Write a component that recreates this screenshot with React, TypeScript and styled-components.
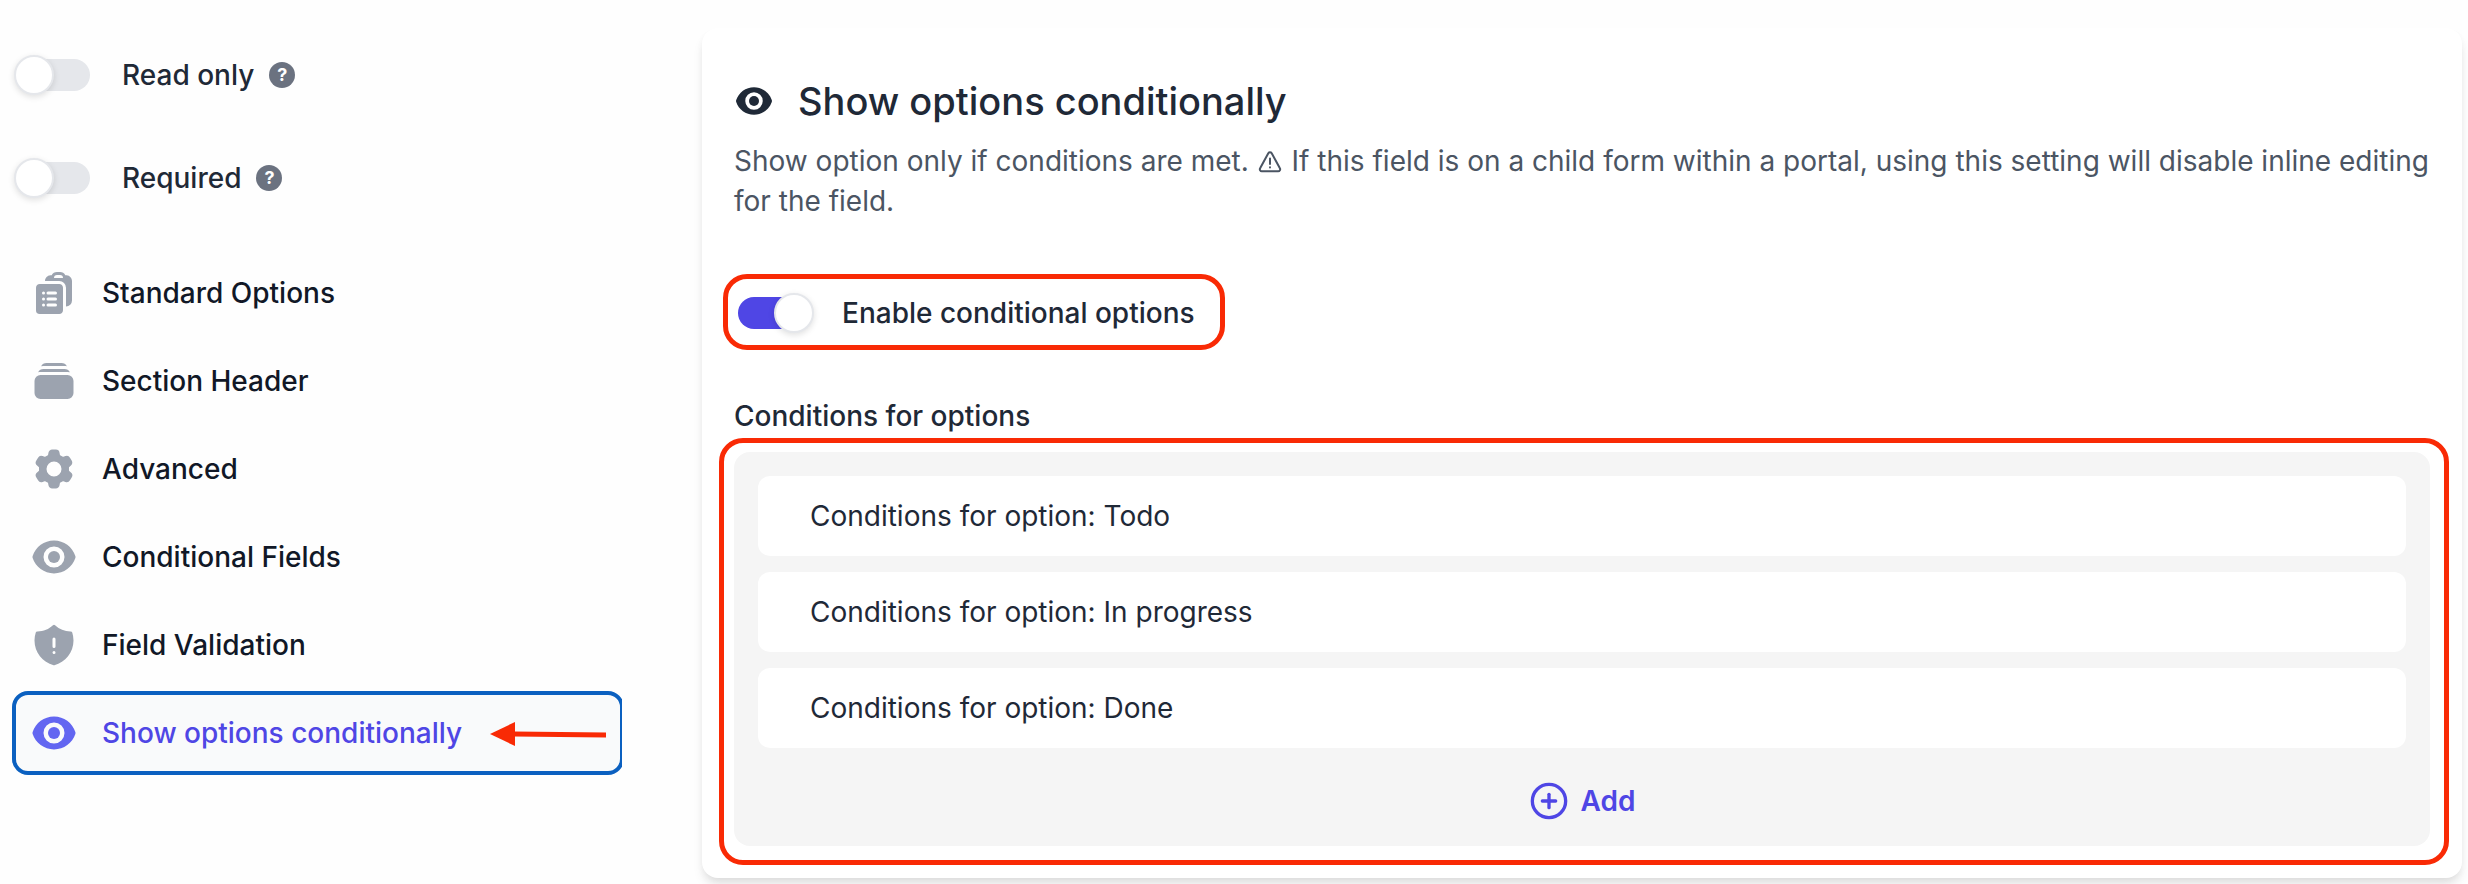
import React from 'react';
import styled, { createGlobalStyle, css } from 'styled-components';
import {
  HiClipboardDocumentList,
  HiCog6Tooth,
  HiEye,
  HiRectangleStack,
  HiShieldExclamation,
} from 'react-icons/hi2';
import { CirclePlus } from 'lucide-react';

const color = {
  ink: '#111827',
  text: '#1f2937',
  muted: '#4b5563',
  icon: '#9ca3af',
  brand: '#4f46e5',
  brandSoft: '#6366f1',
  focus: '#0b60c0',
  mark: '#f92a05',
  panel: '#f5f5f5',
};

const GlobalStyle = createGlobalStyle`
  *, *::before, *::after { box-sizing: border-box; }
  body {
    margin: 0;
    background: #fefefe;
    color: ${color.text};
    font-family: Inter, "Liberation Sans", sans-serif;
    font-size: 28px;
    line-height: 40px;
  }
  h1, h2, p, ul { margin: 0; padding: 0; }
  button, input { font: inherit; }
`;

const Page = styled.div`
  display: flex;
  align-items: flex-start;
  gap: 80px;
  padding: 28px 6px 6px 12px;
`;

const Sidebar = styled.aside`
  flex: none;
  width: 610px;
  padding-top: 27px;
`;

const Switches = styled.div`
  display: flex;
  flex-direction: column;
  gap: 63px;
  padding-left: 2px;
`;

const SwitchRow = styled.div`
  display: flex;
  align-items: center;
  height: 40px;
`;

const SwitchLabel = styled.label`
  margin-left: 28px;
  font-weight: 500;
`;

const Switch = styled.input.attrs({ type: 'checkbox', role: 'switch' })`
  appearance: none;
  flex: none;
  display: flex;
  align-items: center;
  width: 80px;
  height: 40px;
  margin: 0;
  position: relative;

  &::before {
    content: '';
    width: 72px;
    height: 32px;
    margin: 0 4px;
    border-radius: 16px;
    background: #e5e7eb;
  }
  &::after {
    content: '';
    position: absolute;
    left: 0;
    top: 0;
    width: 40px;
    height: 40px;
    border: 2px solid #e5e7eb;
    border-radius: 50%;
    background: #fff;
    box-shadow: 0 2px 6px rgba(0, 0, 0, 0.12);
  }
  &:checked::before { background: ${color.brand}; }
  &:checked::after { left: 40px; }
`;

const Help = styled.button`
  display: flex;
  align-items: center;
  justify-content: center;
  width: 26px;
  height: 26px;
  margin-left: 15px;
  padding: 0;
  border: 0;
  border-radius: 50%;
  background: #6b7280;
  color: #fff;
  font-size: 18px;
  font-weight: 700;
  line-height: 26px;
`;

const Nav = styled.nav`
  display: flex;
  flex-direction: column;
  gap: 4px;
  margin-top: 53px;
  overflow: hidden;
`;

const NavItem = styled.button<{ $active?: boolean }>`
  display: flex;
  align-items: center;
  height: 84px;
  margin-right: -2px;
  padding: 0 12px 0 14px;
  border: 4px solid transparent;
  border-radius: 16px;
  background: none;
  color: ${color.ink};
  font-weight: 500;
  text-align: left;
  white-space: nowrap;

  > svg:first-child {
    flex: none;
    width: 48px;
    height: 48px;
    margin-right: 24px;
    color: ${color.icon};
  }
  ${(p) =>
    p.$active &&
    css`
      border-color: ${color.focus};
      background: #f9fafb;
      color: ${color.brand};
      > svg:first-child { color: ${color.brandSoft}; }
    `}
`;

const Arrow = styled.svg`
  flex: none;
  width: 116px;
  height: 28px;
  margin-left: 28px;
`;

const Card = styled.main`
  flex: 1;
  min-width: 0;
  padding: 49px 32px 32px;
  border-radius: 16px;
  background: #fff;
  box-shadow: 0 8px 12px -2px rgba(0, 0, 0, 0.1), 0 4px 8px -2px rgba(0, 0, 0, 0.06);
`;

const Heading = styled.div`
  display: flex;
  align-items: center;
  gap: 24px;
  height: 48px;

  svg { flex: none; width: 40px; height: 40px; }
`;

const Title = styled.h1`
  font-size: 38px;
  font-weight: 500;
  line-height: 48px;
`;

const Description = styled.p`
  margin-top: 16px;
  color: ${color.muted};
`;

const Warning = styled.svg`
  width: 24px;
  height: 24px;
  margin: 0 2px 0 1px;
  vertical-align: -3px;
  fill: none;
  stroke: currentColor;
  stroke-width: 2;
  stroke-linecap: round;
  stroke-linejoin: round;
`;

const marked = css`
  position: relative;
  &::after {
    content: '';
    position: absolute;
    border: 5px solid ${color.mark};
    border-radius: 24px;
    pointer-events: none;
  }
`;

const MarkedSwitch = styled(SwitchRow)`
  ${marked}
  width: fit-content;
  margin-top: 72px;
  &::after { inset: -19px -30px -17px -11px; }
`;

const SectionTitle = styled.h2`
  margin-top: 63px;
  font-size: 28px;
  font-weight: 500;
  line-height: 40px;
`;

const Panel = styled.section`
  ${marked}
  margin-top: 16px;
  padding: 24px;
  border-radius: 16px;
  background: ${color.panel};
  &::after { inset: -14px -19px -19px -15px; }
`;

const Conditions = styled.ul`
  display: flex;
  flex-direction: column;
  gap: 16px;
  list-style: none;
`;

const Condition = styled.li`
  padding: 20px 52px;
  border-radius: 12px;
  background: #fff;
`;

const AddButton = styled.button`
  display: flex;
  align-items: center;
  gap: 12px;
  height: 42px;
  margin: 32px auto 0;
  padding: 0;
  border: 0;
  background: none;
  color: ${color.brand};
  font-weight: 600;

  svg { width: 40px; height: 40px; }
`;

const navItems = [
  { label: 'Standard Options', Icon: HiClipboardDocumentList },
  { label: 'Section Header', Icon: HiRectangleStack },
  { label: 'Advanced', Icon: HiCog6Tooth },
  { label: 'Conditional Fields', Icon: HiEye },
  { label: 'Field Validation', Icon: HiShieldExclamation },
  { label: 'Show options conditionally', Icon: HiEye, active: true },
];

const switches = [
  { id: 'read-only', label: 'Read only' },
  { id: 'required', label: 'Required' },
];

const options = ['Todo', 'In progress', 'Done'];

export default function App() {
  return (
    <>
      <GlobalStyle />
      <Page>
        <Sidebar>
          <Switches>
            {switches.map(({ id, label }) => (
              <SwitchRow key={id}>
                <Switch id={id} />
                <SwitchLabel htmlFor={id}>{label}</SwitchLabel>
                <Help type="button">?</Help>
              </SwitchRow>
            ))}
          </Switches>
          <Nav>
            {navItems.map(({ label, Icon, active }) => (
              <NavItem key={label} type="button" $active={active}>
                <Icon />
                {label}
                {active && (
                  <Arrow viewBox="0 0 116 28" aria-hidden="true">
                    <path d="M0 15 25 3v24z" fill={color.mark} />
                    <path d="M24 15 116 16" stroke={color.mark} strokeWidth="5" />
                  </Arrow>
                )}
              </NavItem>
            ))}
          </Nav>
        </Sidebar>
        <Card>
          <Heading>
            <HiEye />
            <Title>Show options conditionally</Title>
          </Heading>
          <Description>
            Show option only if conditions are met.{' '}
            <Warning viewBox="0 0 24 24" role="img" aria-label="Warning">
              <path d="M10.3 3.2 2.1 18.2a2 2 0 0 0 1.7 3h16.4a2 2 0 0 0 1.7-3L13.7 3.2a2 2 0 0 0-3.4 0Z" />
              <path d="M12 8.5v5.5M12 17.3v.1" />
            </Warning>{' '}
            If this field is on a child form within a portal, using this setting will disable inline
            editing for the field.
          </Description>
          <MarkedSwitch>
            <Switch id="enable-conditions" defaultChecked />
            <SwitchLabel htmlFor="enable-conditions">Enable conditional options</SwitchLabel>
          </MarkedSwitch>
          <SectionTitle>Conditions for options</SectionTitle>
          <Panel>
            <Conditions>
              {options.map((option) => (
                <Condition key={option}>Conditions for option: {option}</Condition>
              ))}
            </Conditions>
            <AddButton type="button">
              <CirclePlus />
              Add
            </AddButton>
          </Panel>
        </Card>
      </Page>
    </>
  );
}
